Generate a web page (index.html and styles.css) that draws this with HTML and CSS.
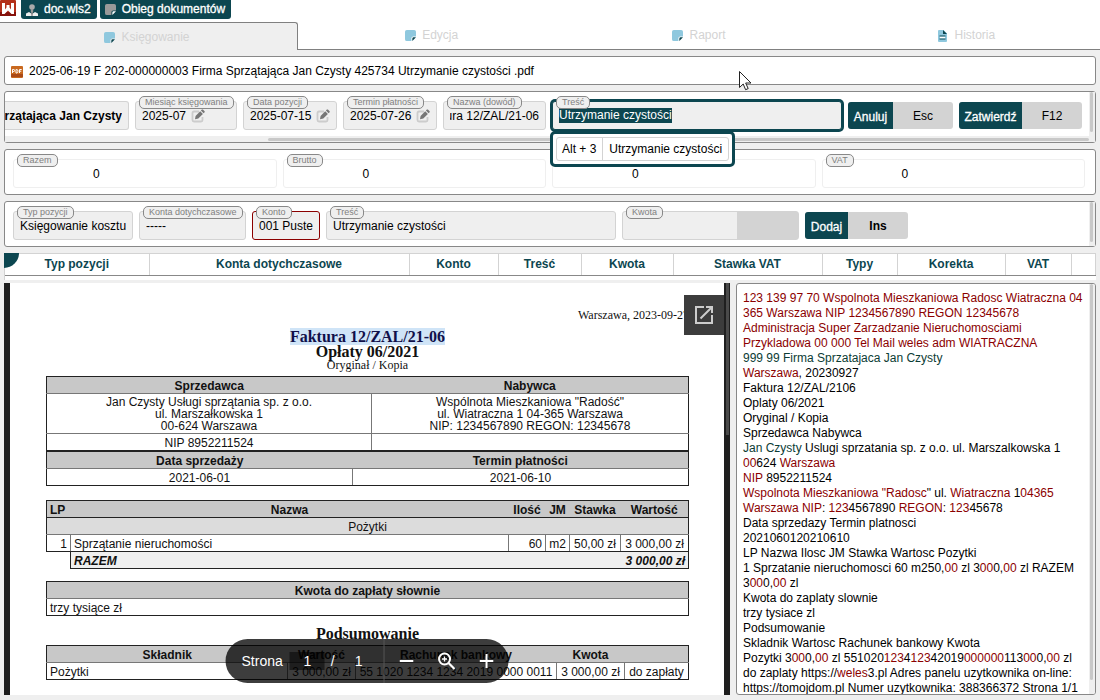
FILE: index.html
```html
<!DOCTYPE html>
<html lang="pl">
<head>
<meta charset="utf-8">
<title>Obieg dokumentów</title>
<link rel="stylesheet" href="styles.css">
</head>
<body>
<svg class="defs" width="0" height="0" aria-hidden="true">
  <symbol id="note" viewBox="0 0 12 12"><path d="M2 0h8q2 0 2 2v5H9q-2 0-2 2v3H2q-2 0-2-2V2q0-2 2-2z" fill="currentColor"/><path class="fold" d="M8 12V9.500Q8 8 9.500 8H12z"/></symbol>
  <symbol id="edit" viewBox="0 0 14 14"><path d="M8 2.500H3Q1.500 2.500 1.500 4v7Q1.500 12.500 3 12.500h7q1.500 0 1.500-1.500V8" fill="none" stroke="#ccc" stroke-width="1.800"/><path d="M4 10.300l.6-3.400 4.600-4.600 2.700 2.700-4.600 4.600zM9.900 1.600l1-1q.5-.4 1 0l1.700 1.700q.4.500 0 1l-1 1z" fill="#777"/></symbol>
</svg>

<header class="top">
  <nav class="crumbs">
    <a class="logo" href="#" aria-label="Weles"><svg viewBox="0 0 16 16" width="16" height="16"><rect width="16" height="16" rx="1" fill="#b3301a"/><path d="M0 12h16v4H0z" fill="#86120c"/><path d="M2 3h3v6.500l1.500-2V5h3v2.500l1.500 2V3h3v11h-2.500L8 10.500 4.500 14H2z" fill="#fff"/></svg></a>
    <a class="crumb" href="#"><svg viewBox="0 0 12 12" width="12" height="12"><circle cx="6" cy="3" r="2.800" fill="#aaa"/><path d="M4.800 5h2.400v3H4.800z" fill="#999"/><path d="M0 12V9.500L3 8l3 2 3-2 3 1.500V12z" fill="#eee"/><path d="M5 8h2l-.4 4H5.400z" fill="#888"/></svg>doc.wls2</a>
    <a class="crumb" href="#"><svg class="gray" width="11" height="11"><use href="#note"/></svg>Obieg dokumentów</a>
  </nav>
  <nav class="tabs">
    <a class="tab active" href="#"><svg width="11" height="11"><use href="#note"/></svg>Księgowanie</a>
    <a class="tab" href="#"><svg width="11" height="11"><use href="#note"/></svg>Edycja</a>
    <a class="tab" href="#"><svg width="11" height="11"><use href="#note"/></svg>Raport</a>
    <a class="tab" href="#"><svg viewBox="0 0 11 12" width="11" height="12"><path d="M1 1q0-1 1-1h4.500L10 3.500V11q0 1-1 1H2q-1 0-1-1z" fill="#8fc8de"/><path d="M6 0l4 4H6z" fill="#0c4650"/><path d="M2.500 5.500h6v1h-6zM2.500 8.500h6v1h-6z" fill="#0c4650"/><path d="M3 6.800h5v1.400H3z" fill="#fff"/></svg>Historia</a>
  </nav>
</header>

<main class="work">
  <div class="panel file">
    <svg viewBox="0 0 12 12" width="12" height="12"><rect width="12" height="12" rx="1" fill="#c9691f"/><path d="M0 8h12v3H0z" fill="#a94a18"/><path d="M1.500 7V3.500h1.300q.8 0 .8 1t-.8 1H1.500M5 3.500h.8q1.200 0 1.200 1.700T5.800 7H5zM8.500 7V3.500h2.200M8.500 5.200h1.800" fill="none" stroke="#fff"/></svg>
    <span>2025-06-19 F 202-000000003 Firma Sprzątająca Jan Czysty 425734 Utrzymanie czystości .pdf</span>
  </div>

  <form class="panel entry">
    <div class="row entry-row">
      <div class="field firm"><input aria-label="Kontrahent" dir="rtl" value="Firma Sprzątająca Jan Czysty"></div>
      <div class="field month"><label for="m">Miesiąc księgowania</label><input id="m" value="2025-07"><button type="button" aria-label="Zmień miesiąc"><svg width="14" height="14"><use href="#edit"/></svg></button></div>
      <div class="field date"><label for="dp">Data pozycji</label><input id="dp" value="2025-07-15"><button type="button" aria-label="Zmień datę"><svg width="14" height="14"><use href="#edit"/></svg></button></div>
      <div class="field date"><label for="tp">Termin płatności</label><input id="tp" value="2025-07-26"><button type="button" aria-label="Zmień termin"><svg width="14" height="14"><use href="#edit"/></svg></button></div>
      <div class="field proof"><label for="nd">Nazwa (dowód)</label><input id="nd" dir="rtl" value="Faktura 12/ZAL/21-06"></div>
      <div class="field focused"><label for="tr">Treść</label><input id="tr" value="Utrzymanie czystości">
        <div class="hint"><button type="button"><kbd>Alt + 3</kbd><span>Utrzymanie czystości</span></button></div>
      </div>
      <button type="button" class="action"><span class="w-m">Anuluj</span><kbd>Esc</kbd></button>
      <button type="button" class="action"><span class="w-l">Zatwierdź</span><kbd>F12</kbd></button>
    </div>
    <div class="vbar"><i></i></div>
    <div class="hbar"><i></i></div>
  </form>

  <div class="panel sums">
    <div class="field sum"><label for="s1">Razem</label><input id="s1" value="0"></div>
    <div class="field sum"><label for="s2">Brutto</label><input id="s2" value="0"></div>
    <div class="field sum"><input id="s3" aria-label="Netto" value="0"></div>
    <div class="field sum"><label for="s4">VAT</label><input id="s4" value="0"></div>
  </div>

  <form class="panel entry">
    <div class="row item-row">
      <div class="field kind"><label for="k1">Typ pozycji</label><input id="k1" value="Księgowanie kosztu"></div>
      <div class="field accounts"><label for="k2">Konta dotychczasowe</label><input id="k2" value="-----"></div>
      <div class="field account"><label for="k3">Konto</label><input id="k3" value="001 Puste"></div>
      <div class="field text"><label for="k4">Treść</label><input id="k4" value="Utrzymanie czystości"></div>
      <div class="field amount"><label for="k5">Kwota</label><input id="k5" value=""><span class="unit"></span></div>
      <button type="button" class="action"><span class="w-s">Dodaj</span><kbd class="strong">Ins</kbd></button>
    </div>
    <div class="vbar"><i></i></div>
  </form>

  <div class="positions">
    <span class="corner"></span>
    <table class="heads">
      <colgroup><col class="c1"><col class="c2"><col class="c3"><col class="c4"><col class="c5"><col class="c6"><col class="c7"><col class="c8"><col class="c9"><col></colgroup>
      <thead><tr><th>Typ pozycji</th><th>Konta dotychczasowe</th><th>Konto</th><th>Treść</th><th>Kwota</th><th>Stawka VAT</th><th>Typy</th><th>Korekta</th><th>VAT</th><th></th></tr></thead>
    </table>
  </div>

  <div class="preview">
    <section class="viewer">
      <article class="page">
        <p class="place">Warszawa, 2023-09-27</p>
        <h1><mark>Faktura 12/ZAL/21-06</mark></h1>
        <h2>Opłaty 06/2021</h2>
        <p class="copy">Oryginał / Kopia</p>
        <table class="doc parties">
          <colgroup><col class="seller"><col></colgroup>
          <tr class="hd"><th>Sprzedawca</th><th>Nabywca</th></tr>
          <tr><td class="address">Jan Czysty Usługi sprzątania sp. z o.o.<br>ul. Marszałkowska 1<br>00-624 Warszawa</td><td class="address">Wspólnota Mieszkaniowa "Radość"<br>ul. Wiatraczna 1 04-365 Warszawa<br>NIP: 1234567890 REGON: 12345678</td></tr>
          <tr><td>NIP 8952211524</td><td></td></tr>
        </table>
        <table class="doc dates">
          <colgroup><col class="sold"><col></colgroup>
          <tr class="hd"><th>Data sprzedaży</th><th>Termin płatności</th></tr>
          <tr><td>2021-06-01</td><td>2021-06-10</td></tr>
        </table>
        <table class="doc items">
          <colgroup><col class="lp"><col><col class="qty"><col class="jm"><col class="rate"><col class="value"></colgroup>
          <tr class="hd"><th class="l">LP</th><th>Nazwa</th><th>Ilość</th><th>JM</th><th>Stawka</th><th>Wartość</th></tr>
          <tr class="group"><td colspan="6">Pożytki</td></tr>
          <tr class="item"><td class="r">1</td><td class="l">Sprzątanie nieruchomości</td><td class="r">60</td><td>m2</td><td>50,00 zł</td><td>3 000,00 zł</td></tr>
          <tr class="total"><td class="void"></td><td class="l first">RAZEM</td><td class="r" colspan="4">3 000,00 zł</td></tr>
        </table>
        <table class="doc words">
          <tr class="hd"><th>Kwota do zapłaty słownie</th></tr>
          <tr><td class="l">trzy tysiące zł</td></tr>
        </table>
        <h3>Podsumowanie</h3>
        <table class="doc summary">
          <colgroup><col><col class="value"><col class="bank"><col class="value"><col class="state"></colgroup>
          <tr class="hd"><th>Składnik</th><th>Wartość</th><th>Rachunek bankowy</th><th>Kwota</th><th></th></tr>
          <tr><td class="l">Pożytki</td><td>3 000,00 zł</td><td>55 1020 1234 1234 2019 0000 0011</td><td>3 000,00 zł</td><td>do zapłaty</td></tr>
        </table>
      </article>
      <div class="track"><i></i></div>
      <button type="button" class="open" aria-label="Otwórz w nowym oknie"><svg viewBox="0 0 24 24" width="24" height="24"><path d="M19 19H5V5h7V3H3v18h18v-9h-2zM14 3v2h3.600l-9.800 9.800 1.400 1.400L19 6.400V10h2V3z" fill="#ccc"/></svg></button>
      <div class="pager">
        <label for="pg">Strona</label><input id="pg" value="1"><span class="slash">/</span><span class="count">1</span>
        <div class="zooms">
          <button type="button" aria-label="Pomniejsz"><svg viewBox="0 0 14 14" width="14" height="14"><path d="M0 6h14v2H0z" fill="#fff"/></svg></button>
          <button type="button" aria-label="Dopasuj"><svg viewBox="0 0 18 18" width="18" height="18"><circle cx="7" cy="7" r="5.500" fill="none" stroke="#fff" stroke-width="2"/><path d="M11 11l6 6" stroke="#fff" stroke-width="2.200"/><path d="M4.500 7h5M7 4.500v5" stroke="#fff" stroke-width="1.300"/></svg></button>
          <button type="button" aria-label="Powiększ"><svg viewBox="0 0 14 14" width="14" height="14"><path d="M0 6h14v2H0zM6 0h2v14H6z" fill="#fff"/></svg></button>
        </div>
      </div>
    </section>

    <section class="panel ocr">
      <p><b>123 139 97 70 Wspolnota Mieszkaniowa Radosc Wiatraczna 04<br>365 Warszawa NIP 1234567890 REGON 12345678<br>Administracja Super Zarzadzanie Nieruchomosciami<br>Przykladowa 00 000 Tel Mail weles adm WIATRACZNA</b><br><em>999 99 Firma Sprzatajaca Jan Czysty</em><br><b>Warszawa</b>, 20230927<br>Faktura 12/ZAL/2106<br>Oplaty 06/2021<br>Oryginal / Kopia<br>Sprzedawca Nabywca<br><em>Jan Czysty</em> Uslugi sprzatania sp. z o.o. ul. Marszalkowska 1<br><b>00</b>624 <b>Warszawa</b><br><b>NIP</b> 8952211524<br><b>Wspolnota Mieszkaniowa "Radosc</b>" ul. <b>Wiatraczna</b> 1<b>04365</b><br><b>Warszawa NIP</b>: <b>123</b>4567890 <b>REGON</b>: <b>123</b>45678<br>Data sprzedazy Termin platnosci<br>2021060120210610<br>LP Nazwa Ilosc JM Stawka Wartosc Pozytki<br>1 Sprzatanie nieruchomosci 60 m250,<b>00</b> zl 3<b>00</b>0,<b>00</b> zl RAZEM<br>3<b>00</b>0,<b>00</b> zl<br>Kwota do zaplaty slownie<br>trzy tysiace zl<br>Podsumowanie<br>Skladnik Wartosc Rachunek bankowy Kwota<br>Pozytki 3<b>00</b>0,<b>00</b> zl 551020<b>123</b>4<b>123</b>42019<b>000000</b>113<b>00</b>0,<b>00</b> zl<br>do zaplaty https://<b>weles</b>3.pl Adres panelu uzytkownika on-line:<br>https://tomojdom.pl Numer uzytkownika: 388366372 Strona 1/1</p>
      <div class="vbar"><i></i></div>
    </section>
  </div>
</main>
<svg class="pointer" viewBox="0 0 13 20" width="13" height="20" aria-hidden="true"><path d="M.5.500v16l3.700-3.500 2.400 5.700 2.600-1.100-2.500-5.600h5.300z" fill="#fff" stroke="#222"/></svg>
</body>
</html>
```

FILE: styles.css
```css
* { box-sizing: border-box; }

body {
  margin: 0;
  height: 100vh;
  display: flex;
  flex-direction: column;
  overflow: hidden;
  background: #efefef;
  color: #000;
  font: 12px/15px "Liberation Sans", Arial, sans-serif;
}

input, button, kbd { font: inherit; color: inherit; }
button { border: 0; padding: 0; background: none; cursor: pointer; }
input { border: 0; padding: 0; margin: 0; min-width: 0; background: none; outline: none; }
a { color: inherit; text-decoration: none; }
p, h1, h2, h3 { margin: 0; }
svg { display: block; flex: none; }
.defs { position: absolute; }

/* top bar */
.top { background: #fff; }
.crumbs { display: flex; gap: 3px; height: 22px; align-items: flex-start; }
.logo { margin-right: 2px; }
.crumb {
  display: flex;
  align-items: center;
  gap: 6px;
  height: 19px;
  padding: 0 6px 0 5px;
  border-radius: 0 0 3px 3px;
  background: #0c4650;
  color: #fff;
  -webkit-text-stroke: 0.3px #fff;
}
.fold { fill: var(--fold, #0c4650); }
.gray { color: #999; --fold: #fff; }
.tabs { display: flex; height: 28px; }
.tab {
  flex: 1;
  display: flex;
  align-items: center;
  justify-content: center;
  gap: 6px;
  color: #d3d3d3;
  border-bottom: 1px solid #808080;
}
.tab svg { color: #8fc8de; }
.tab.active {
  flex: 0 0 298px;
  padding: 1px 3px 0 0;
  background: #efefef;
  border: solid #808080;
  border-width: 1px 1px 0 0;
  border-radius: 0 3px 0 0;
}

/* panels */
.work { flex: 1; min-height: 0; display: flex; flex-direction: column; gap: 6px; padding: 6px 4px 5px; }
.panel { border: 1px solid #888; border-radius: 3px; background: #fff; }
.file { display: flex; align-items: center; gap: 6px; height: 29px; padding: 2px 6px 0; }
.entry { display: grid; grid-template-columns: 1fr 6px; }
.row { display: flex; gap: 6px; min-width: 0; }
.entry-row { padding: 9px 7px 6px 0; }
.item-row { padding: 9px 6px 6px 8px; }
.vbar { background: #efefef; padding: 0 1px; }
.vbar i { display: block; width: 3px; height: 90%; border-radius: 2px; background: #c8c8c8; }
.hbar { grid-column: 1 / -1; height: 6px; padding: 2px 6px 0 263px; background: #efefef; }
.hbar i { display: block; height: 3px; border-radius: 2px; background: #c8c8c8; }

/* fields */
.field {
  position: relative;
  display: flex;
  align-items: center;
  flex: none;
  height: 29px;
  border: 1px solid #d3d3d3;
  border-radius: 3px;
  background: #efefef;
}
.field > input { flex: 1; width: 100%; height: 100%; padding: 0 6px; }
.field > label {
  position: absolute;
  left: 3px;
  top: -6px;
  height: 13px;
  padding: 0 5px;
  border: 1px solid #888;
  border-radius: 5px;
  background: #efefef;
  color: #808080;
  font-size: 9px;
  line-height: 11px;
  white-space: nowrap;
}
.firm { width: 124px; border-left: 0; border-radius: 0 3px 3px 0; font-weight: bold; }
.firm > input { padding-left: 0; }
.month { width: 102px; }
.month > input { flex: 0 0 55px; padding-right: 0; }
.date { width: 94px; }
.date > input { flex: 0 0 72px; padding-right: 0; }
.proof { width: 103px; }
.focused { flex: 1; border-color: #0c4650; box-shadow: 0 0 0 2px #0c4650; }
.focused > input {
  flex: none;
  width: 113px;
  height: 15px;
  margin-left: 6px;
  padding: 0;
  background: #0c4650;
  color: #fff;
}
.hint {
  position: absolute;
  z-index: 2;
  left: -3px;
  top: 29px;
  padding: 3px;
  border: 3px solid #0c4650;
  border-radius: 5px;
  background: #fff;
}
.hint button { display: flex; border: 1px solid #d3d3d3; border-radius: 3px; white-space: nowrap; line-height: 22px; }
.hint kbd { padding: 0 6px 0 5px; border-right: 1px solid #d3d3d3; }
.hint span { padding: 0 6px; }
.action { display: flex; flex: none; height: 27px; margin-top: 1px; border-radius: 3px; overflow: hidden; line-height: 28px; background: #d3d3d3; }
.action span { background: #0c4650; color: #fff; line-height: 30px; -webkit-text-stroke: 0.3px #fff; }
.action kbd { width: 60px; }
.w-s { width: 43px; }
.w-m { width: 45px; }
.w-l { width: 63px; }
.strong { font-weight: bold; }

.sums { display: flex; gap: 6px; padding: 9px 10px 6px 8px; }
.sum { flex: 1; border-color: #efefef; background: #fff; }
.field.sum > input { flex: 0 0 63%; text-align: center; }
.kind { width: 120px; }
.accounts { width: 107px; }
.account { width: 68px; border-color: #8b0000; }
.text { width: 290px; }
.amount { width: 177px; }
.unit { width: 61px; height: 100%; background: #d3d3d3; }

/* positions table */
.positions { position: relative; height: 27px; margin-bottom: -3px; border-left: 1px solid #d3d3d3; background: #fff; }
.corner { position: absolute; left: -1px; top: 0; width: 15px; height: 15px; border-radius: 0 0 15px 0; background: #0c4650; }
.heads { width: 100%; table-layout: fixed; border-collapse: collapse; color: #0c4650; }
.heads th { height: 22px; padding: 0; border: 1px solid #d3d3d3; border-bottom-color: #888; }
.heads th:first-child { border-left: 0; }
.c1 { width: 144px; }
.c2 { width: 260px; }
.c3 { width: 89px; }
.c4 { width: 83px; }
.c5 { width: 92px; }
.c6 { width: 149px; }
.c7 { width: 75px; }
.c8 { width: 108px; }
.c9 { width: 66px; }

/* document preview */
.preview { flex: 1; min-height: 0; display: grid; grid-template-columns: 726fr 360fr; gap: 6px; }
.viewer { position: relative; display: flex; min-width: 0; overflow: hidden; padding-left: 6px; background: #1f1f1f; }
.page { flex: 1; min-width: 0; padding: 24px 35px 0 36px; background: #fff; color: #111; line-height: 12px; }
.track { width: 6px; padding: 0 1px 0 2px; background: #1f1f1f; }
.track i { display: block; height: 37%; background: #4a4a4a; }
.place, .copy, h1, h2, h3 { font-family: "Liberation Serif", "Times New Roman", serif; }
.place { text-align: right; line-height: 16px; }
h1, h2, h3 { font-size: 16px; line-height: 15px; text-align: center; }
h1 { margin-top: 6px; }
mark { background: #cfe4f7; color: #10104a; }
.copy { text-align: center; line-height: 13px; margin-bottom: 4px; }
.doc { width: 100%; table-layout: fixed; border-collapse: collapse; border: 1px solid #222; }
.doc td, .doc th { height: 17px; padding: 1px 3px 0; border: 1px solid #777; text-align: center; white-space: nowrap; }
.doc tr > :first-child { border-left-color: #222; }
.doc tr > :last-child { border-right-color: #222; }
.doc tr:first-child > * { border-top-color: #222; }
.doc tr:last-child > * { border-bottom-color: #222; }
.doc .hd th { border-left-style: hidden; border-right-style: hidden; background: #c8c8c8; }
.doc .hd th:first-child { border-left-style: solid; }
.doc .hd th:last-child { border-right-style: solid; }
.doc .l { text-align: left; }
.doc .r { text-align: right; }
.doc td.address { height: 40px; }
.seller { width: 325px; }
.sold { width: 306px; }
.items { margin-top: 14px; }
.words { margin-top: 12px; }
.items .hd th { border-bottom-color: #222; }
.group td { background: #dcdcdc; }
.doc .item td { border-bottom-color: #222; }
.doc.items { border-left: 0; border-bottom: 0; }
.total td { background: #efefef; font-weight: bold; font-style: italic; }
.doc .total .first { border-left-color: #222; border-right-style: hidden; }
.doc .total .r { border-left-style: hidden; }
.doc .total .void { border-left: 0; border-bottom: 0; border-right-color: #222; background: #fff; }
.lp { width: 24px; }
.qty { width: 37px; }
.jm { width: 24px; }
.rate { width: 51px; }
.value { width: 68px; }
.bank { width: 201px; }
.state { width: 64px; }
h3 { margin: 10px 0 4px; }

.open { position: absolute; top: 12px; right: 6px; width: 40px; height: 40px; display: grid; place-items: center; background: #3c3c3c; }
.pager {
  position: absolute;
  left: 50%;
  bottom: 12px;
  transform: translateX(-50%);
  display: flex;
  align-items: center;
  height: 44px;
  padding-left: 16px;
  border-radius: 22px;
  background: rgba(0, 0, 0, 0.76);
  color: #fff;
  font-size: 14px;
}
.pager input { width: 35px; height: 18px; margin-left: 7px; background: rgba(0, 0, 0, 0.5); text-align: center; }
.slash { margin-left: 6px; }
.count { margin: 0 21px 0 20px; }
.zooms { display: flex; align-items: center; gap: 24px; height: 100%; padding: 0 15px; border-left: 1px solid #555; }

.ocr { display: grid; grid-template-columns: 1fr 6px; min-width: 0; overflow: hidden; }
.ocr p { padding: 7px 0 0 6px; white-space: nowrap; }
.ocr b { font-weight: normal; color: #8b0000; }
.ocr em { font-style: normal; color: #0c3c35; }
.ocr .vbar i { height: 96%; }

.pointer { position: absolute; left: 739px; top: 71px; }
```
